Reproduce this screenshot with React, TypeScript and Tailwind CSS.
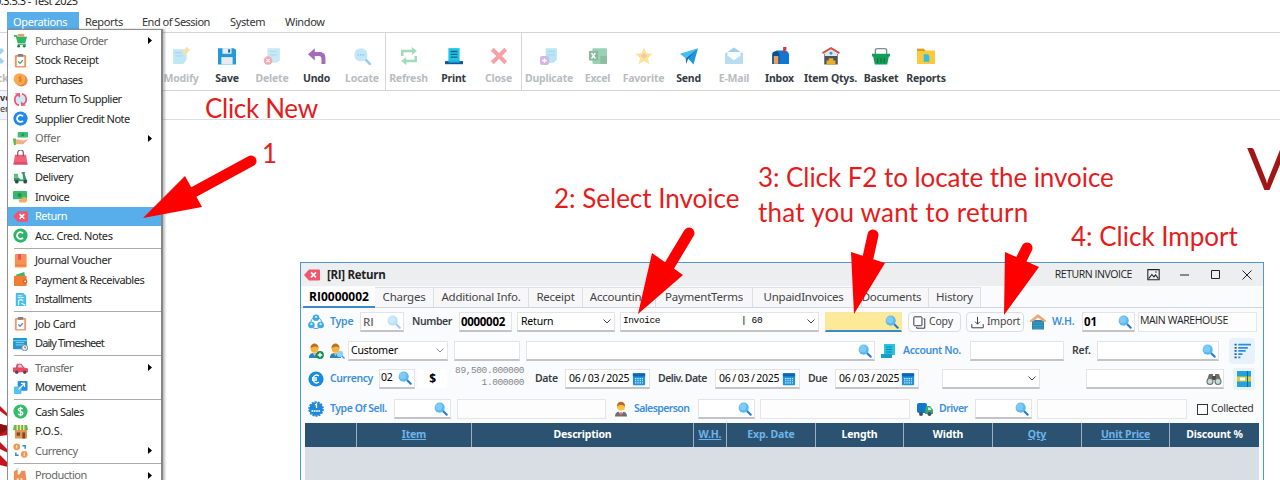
import type { ReactNode } from "react";

type P = { children?: ReactNode; className?: string };

const ART: Record<string, ReactNode> = {
  cart: (<><path d="M1 2h3l1 2h10l-2 7H5L3 4H1z" fill="#2fb766" /><path d="M5 4V1h7v3z" fill="#d8a46b" /><path d="M5 12h9" stroke="#25975a" /><circle cx="6" cy="14" r="1.5" fill="#20864d" /><circle cx="12" cy="14" r="1.5" fill="#20864d" /></>),
  clip: (<><rect x="2" y="2" width="12" height="13.5" rx="1.5" fill="#f0925e" /><rect x="4" y="4" width="8" height="10" fill="#fff" /><rect x="5" y="1" width="6" height="3" rx="1" fill="#7d8288" /><path d="m5.5 9 2 2 3-3.5" stroke="#2ea866" strokeWidth="1.3" fill="none" /></>),
  job: (<><rect x="2" y="2" width="12" height="13.5" rx="1.5" fill="#ee9a6a" /><rect x="4" y="4" width="8" height="10" fill="#fff" /><rect x="5" y="1" width="6" height="3" rx="1" fill="#7d8288" /><path d="m5.5 9 2 2 3-3.5" stroke="#3a86e8" strokeWidth="1.3" fill="none" /></>),
  coin: (<><circle cx="9" cy="9" r="6.5" fill="#e98a3c" /><circle cx="7" cy="7.5" r="6.3" fill="#fba94c" /><path d="M9 5.5H6.5v2H9v2H6M7.5 4v7" stroke="#e07a2c" fill="none" /></>),
  swap: (<><circle cx="8" cy="8" r="5" fill="#c8ecfb" /><path d="M6.500 14C1 13 .500 5 5 3M9.500 2c5.500 1 6 9 1.500 11" stroke="#ee5a74" strokeWidth="1.900" fill="none" /><path d="M2 1.500 7.500 1v5zM14 14.500l-5.500.500v-5z" fill="#ee5a74" /></>),
  cblue: (<><circle cx="8" cy="8" r="7.6" fill="#1e88ee" /><path d="M10.6 5.6a3.6 3.6 0 1 0 0 4.8" stroke="#fff" strokeWidth="2" fill="none" /></>),
  cgreen: (<><circle cx="8" cy="8" r="7.6" fill="#2cb567" /><path d="M10.6 5.6a3.6 3.6 0 1 0 0 4.8" stroke="#fff" strokeWidth="2" fill="none" /></>),
  dollar: (<><circle cx="8" cy="8" r="7.6" fill="#33bd6b" /><path d="M10.3 5.5C9.5 4 5.7 4 5.7 6.2s4.8 1.4 4.8 3.7-4 2.2-5 .5M8 3v10" stroke="#fff" strokeWidth="1.4" fill="none" /></>),
  offer: (<><rect x="5" y="1" width="11" height="6" rx="1" fill="#3fbd70" /><circle cx="10.5" cy="4" r="1.6" fill="#26955a" /><path d="M1 9h5l5 1c2 0 4-2 5-1l-5 5H4L1 13z" fill="#f2b184" /><path d="M0 8h3v7H1z" fill="#50b848" /></>),
  bag: (<><path d="M2 5h12l1.5 10.5H.5z" fill="#f2617a" /><path d="M5 7V3a3 3 0 0 1 6 0v4" stroke="#7a5360" strokeWidth="1.2" fill="none" /><path d="M1 13h14l.5 2.5H.5z" fill="#d84c66" /></>),
  scooter: (<><path d="M1 8h5l2 2h3l-1-7h2l2 6 1.500 3H1z" fill="#2f9b63" /><rect x="1" y="4" width="4.500" height="4" fill="#57c288" /><path d="M9 3h4" stroke="#444" /><circle cx="4" cy="12.5" r="2" fill="#334b45" /><circle cx="13" cy="12.5" r="2" fill="#334b45" /></>),
  cash: (<><rect x="0" y="2" width="15" height="9" rx="1" fill="#39b86b" /><circle cx="7" cy="6.5" r="2.3" fill="#1f9150" /><circle cx="12" cy="11.5" r="3" fill="#f5ac52" /><path d="M6 12c2-2 4-1 6 0l-2 2.500H7z" fill="#f0a878" /></>),
  ret: (<><path d="M5 2.5h10a1 1 0 0 1 1 1v9a1 1 0 0 1-1 1H5L0 8z" fill="#f0566e" /><path d="m7 5.4 5 5M12 5.4l-5 5" stroke="#fff" strokeWidth="1.7" /></>),
  book: (<><rect x="2" y="1" width="12.5" height="14.5" rx="1" fill="#f79153" /><path d="M5.5 1h3v7L7 6.5 5.5 8z" fill="#ee4a62" /><path d="M2 13h12" stroke="#de7a3d" /></>),
  wallet: (<><path d="M3 3 12 0l1 5H4z" fill="#3cb56c" /><rect x="1" y="4" width="13.5" height="11" rx="1" fill="#ef7d33" /><circle cx="13" cy="10" r="2.4" fill="#d55f21" /><circle cx="13" cy="10" r="1" fill="#fff" /></>),
  install: (<><path d="M3 1h8l3 3v11H3z" fill="#48bdf0" /><path d="M5 4h5M5 6h7" stroke="#e4f8ff" /><path d="M6 14V9l3-1 2 2M9 12l4 2" stroke="#e4f8ff" strokeWidth="1.2" fill="none" /></>),
  sheet: (<><rect x="0" y="2" width="15" height="12" rx="1" fill="#2596ce" /><path d="M0 5h15M3 7h9M3 9.5h9" stroke="#8ad7f2" /><circle cx="12.5" cy="12.5" r="3.2" fill="#e8ebef" stroke="#6d7a86" strokeWidth=".9" /><path d="M12.5 11v1.6h1.3" stroke="#555" strokeWidth=".8" fill="none" /></>),
  car: (<><path d="M4 4h5l3 4 4 1v4H0V8h3z" fill="#ee4862" /><path d="M5.5 5h3l2 3h-5z" fill="#a6e0f4" /><circle cx="4" cy="13" r="1.8" fill="#4b4b55" /><circle cx="12.5" cy="13" r="1.8" fill="#4b4b55" /></>),
  move: (<><rect x="5" y="1" width="10.5" height="10.5" rx="1" fill="#2a8de0" /><rect x="1" y="7" width="8" height="8" rx="1" fill="#55c3ee" /><path d="m6 10 6-6M8.5 3.7H12.3v3.8" stroke="#fff" strokeWidth="1.3" fill="none" /></>),
  shop: (<><rect x="2" y="6" width="13" height="9.5" fill="#e6944c" /><path d="M1 1h14l1 5.5H0z" fill="#67b84f" /><path d="M4.5 1v5.5M8 1v5.5M11.5 1v5.5" stroke="#f7e6a4" strokeWidth="1.5" /><rect x="4" y="9" width="3.5" height="3.5" fill="#704b35" /><rect x="10" y="9" width="3" height="6.5" fill="#704b35" /></>),
  curr: (<><circle cx="4" cy="4" r="3.6" fill="#f09850" /><circle cx="12" cy="12" r="3.6" fill="#f09850" /><path d="M10 3h3v3M6 13H3v-3" stroke="#2f86d8" strokeWidth="1.5" fill="none" /><path d="M4 2.3v3.4M12 10.3v3.4" stroke="#fff" /></>),
  factory: (<><path d="M1 15V4l2-2h2v5h2l2-4h4l1.5 12z" fill="#f08b52" /><path d="M4 15v-4h2v4M8 15v-4h2v4" fill="#fff3e4" /><path d="M3 1h3" stroke="#cfe9f4" strokeWidth="2" /></>),
  modify: (<><path d="M1 2h12v9l-3 4H1z" fill="#7fd0f2" /><path d="M3 5h6M3 8h6" stroke="#52b0e2" /><path d="m8.500 5 4.500-5 3 2.500-4.500 5z" fill="#eec35c" /></>),
  save: (<><path d="M0 1h14L16 2.500V15.500H0z" fill="#239ad7" /><rect x="4" y="1" width="8" height="5" fill="#e7eef3" /><rect x="9" y="2" width="1.8" height="3" fill="#2a6487" /><rect x="3" y="9" width="10" height="6.500" fill="#e9ecf0" /></>),
  del: (<><path d="M4 1h11v11l-3 2H4z" fill="#8ed2f0" /><path d="M6 4h6M6 7h6" stroke="#5eb5df" /><circle cx="4.5" cy="12" r="3.8" fill="#f05260" /><path d="m3 10.5 3 3m0-3-3 3" stroke="#fff" /></>),
  undo: (<path d="M6 1v3.500h4c4 0 5.500 2 5.500 5.500v5h-3.500v-4c0-2-.6-3-2.500-3H6V12L0 6.500z" fill="#a569bd" />),
  locate: (<><path d="m10 10 5 5" stroke="#3c96d8" strokeWidth="2.2" strokeLinecap="round" /><circle cx="7" cy="7" r="5.9" fill="#87d0f2" /><path d="M4 7h6" stroke="#3378aa" strokeWidth="1.3" strokeDasharray="1.3 1" /></>),
  refresh: (<><path d="M2 8V3.500h9M14 8v4.500H5" stroke="#43bd70" strokeWidth="2.200" fill="none" /><path d="m10.500 0 4.500 3.500-4.500 3.500zM5.500 9 1 12.500 5.500 16z" fill="#43bd70" /></>),
  print: (<><path d="M3 1h10v12H3z" fill="#22c3e6" /><path d="M5 4h6M5 6.5h6M5 9h6" stroke="#126887" strokeWidth="1.2" /><path d="M0 12.5h16v2.8H0z" fill="#14589b" /><path d="M3 12h10v1.8H3z" fill="#1fb0da" /></>),
  x: (<path d="M2 2 14 14M14 2 2 14" stroke="#ea4653" strokeWidth="3.600" />),
  bluex: (<path d="M2 2 14 14M14 2 2 14" stroke="#48a7df" strokeWidth="3.600" />),
  dup: (<><path d="M5 1h10v10l-3 3H5z" fill="#74cceb" /><path d="M7 4h6M7 7h6" stroke="#4bb2db" /><rect x="0" y="8" width="8" height="8" rx="1.8" fill="#ab6fd0" /><path d="M4 10v4m-2-2h4" stroke="#fff" strokeWidth="1.2" /></>),
  excel: (<><rect x="3" y="1" width="13" height="14" rx="1" fill="#36a56c" /><path d="M10 8h6v7h-6z" fill="#1d7c49" /><rect x="0" y="3.5" width="8" height="8.500" fill="#177443" /><path d="m2.200 5.300 3.500 5m0-5-3.500 5" stroke="#fff" strokeWidth="1.3" /></>),
  star: (<><path d="m8 .5 2.2 5.1 5.5.4-4.2 3.7 1.3 5.6L8 12.4l-4.8 2.9 1.3-5.6L.3 6l5.500-.4z" fill="#fac93b" /><path d="M8 5.5v5M5.5 8h5" stroke="#ee8a45" strokeWidth="1.6" /></>),
  send: (<><path d="M0 6 16 1 5 10z" fill="#44bdf4" /><path d="M16 1 12 15.500 7 10z" fill="#1798e0" /><path d="m5 10 11-9-9 10-1.500 4z" fill="#1776b8" /></>),
  mail: (<><path d="m0 6 8-5.500L16 6v9H0z" fill="#4aa0d6" /><path d="M2 4.500h12V8l-6 4-6-4z" fill="#f2f8fb" /><path d="m0 6 8 6 8-6v9H0z" fill="#72bce4" /></>),
  inbox: (<><path d="M3 15V7a3.5 3.5 0 0 1 3.5-4H12a4 4 0 0 1 4 4v8z" fill="#0f78d4" /><path d="M1 15V7a3 3 0 0 1 6.500 0v8z" fill="#0b4f94" /><path d="M2.500 8h4v7h-4z" fill="#f0a156" /><path d="M11.500 6V.500H13v2h-1.500" fill="none" stroke="#cf2c3d" strokeWidth="1.300" /></>),
  house: (<><path d="M2 6h12v9.5H2z" fill="#4d525b" /><path d="M2.500 6 8 2l5.500 4v2h-11z" fill="#dce9f2" /><path d="m.5 5.500 7.500-4.500 7.500 4.500" stroke="#d7533b" strokeWidth="1.7" fill="none" /><circle cx="8" cy="5.500" r="1.3" fill="#2a9de2" /><path d="M6 10h4v2h2v3.5H4V12h2z" fill="#e8af27" /></>),
  basket: (<><path d="M3 7V3c0-1 1-1.500 2-1.500h6c1 0 2 .500 2 1.500v4" stroke="#7e8c91" strokeWidth="1.200" fill="none" /><path d="M0 6h16v2.500h-1L13.500 15.500h-11L1 8.500H0z" fill="#139d58" /><path d="M5 10v4M8 10v4M11 10v4" stroke="#0a733c" /></>),
  folder: (<><path d="M0 1.500h6L7.500 3H16v12H0z" fill="#fbc83e" /><path d="M0 1.500h6l1.500 2H0z" fill="#dd9c23" /><path d="M6 6.500h3.500L11 8v5H6z" fill="#32bfe5" /></>),
  people: (<><path d="M8 3a6 6 0 0 1 5.5 8M3 11A6 6 0 0 1 8 3M4 13a6 6 0 0 0 8 0" stroke="#5a9dc2" fill="none" /><circle cx="8" cy="3.8" r="3.300" fill="#3ea9e4" /><circle cx="3.4" cy="11" r="3.300" fill="#3ea9e4" /><circle cx="12.6" cy="11" r="3.300" fill="#3ea9e4" /><circle cx="8" cy="2.9" r="1.2" fill="#b8e8fb" /><circle cx="3.4" cy="10" r="1.2" fill="#b8e8fb" /><circle cx="12.6" cy="10" r="1.2" fill="#b8e8fb" /></>),
  lens: (<><path d="m10 10 4.5 4.5" stroke="#1f77d8" strokeWidth="2.3" strokeLinecap="round" /><circle cx="6.5" cy="6.5" r="5.8" fill="#5ab8f2" /><circle cx="5.500" cy="5.500" r="4" fill="#7fcbf7" /></>),
  useradd: (<><path d="M1 15c0-4 2-5 5.5-5s5.5 1 5.5 5z" fill="#2382ca" /><path d="m4.5 9.5 2 4 2-4z" fill="#f0b06c" /><circle cx="6.5" cy="5.5" r="4" fill="#f7b23a" /><path d="M2.5 5c0-6 8-6 8 0-2-2-5-1-8 0z" fill="#bb7025" /><circle cx="12" cy="12" r="3.9" fill="#159052" /><path d="M12 9.8v4.4M9.8 12h4.4" stroke="#fff" strokeWidth="1.3" /></>),
  userfind: (<><path d="M1 15c0-4 2-5 5.5-5s5.5 1 5.5 5z" fill="#2382ca" /><path d="m4.5 9.5 2 4 2-4z" fill="#f0b06c" /><circle cx="6.5" cy="5.5" r="4" fill="#f7b23a" /><path d="M2.5 5c0-6 8-6 8 0-2-2-5-1-8 0z" fill="#bb7025" /><circle cx="11" cy="11" r="3.2" fill="#8bd6f6" /><path d="m13 13 2.5 2.5" stroke="#4c9cd8" strokeWidth="1.5" /></>),
  person: (<><path d="M2 15.500c0-4 2.500-5 6-5s6 1 6 5z" fill="#6a6f79" /><path d="m5.5 10 2.500 5 2.500-5z" fill="#fff" /><path d="M7.5 11h1L9 15H7z" fill="#d94545" /><circle cx="8" cy="5.5" r="4" fill="#f8c23e" /><path d="M4 5.500c-.500-6.500 8.500-6.500 8 0-2-2-6-2-8 0z" fill="#bc672b" /></>),
  account: (<><path d="M4 1h11v11H4z" fill="#28c3de" /><path d="M1 11h11v4H1z" fill="#1a9fc6" /><path d="M6 4h6M6 6.5h6M6 9h6" stroke="#0b85ad" /></>),
  euro: (<><circle cx="8" cy="8" r="7.6" fill="#188ce2" /><path d="M11 5a3.8 3.8 0 1 0 0 6M4 7h5M4 9h5" stroke="#fff" strokeWidth="1.3" fill="none" /></>),
  free: (<><circle cx="8" cy="8" r="6.800" fill="#2188d8" /><circle cx="8" cy="8" r="7" fill="none" stroke="#2188d8" strokeWidth="1.600" strokeDasharray="2 1.142" /><path d="M7 4 8.500 3v4" stroke="#fff" strokeWidth="1.300" fill="none" /><path d="M3.500 10h9" stroke="#fff" strokeWidth="2" strokeDasharray="1.700 .600" opacity=".8" /></>),
  whouse: (<><path d="M2 6h12v9.5H2z" fill="#2a86b0" /><path d="M3 9h10M3 11.5h10M3 14h10" stroke="#3f9fc6" strokeWidth="1.2" /><path d="M0 6.500 8 0l8 6.500V8l-3-.500-5-4-5 4L0 8z" fill="#f3a56f" /></>),
  truck: (<><rect x="0" y="2" width="10" height="10" rx="2" fill="#1376c8" /><path d="M9 5h4l3 4v4H8z" fill="#39a96c" /><path d="M11 6.5h2l1.5 2.5H11z" fill="#c8f0ee" /><circle cx="4" cy="13" r="2" fill="#405168" /><circle cx="12.5" cy="13" r="2" fill="#405168" /></>),
  cal: (<><rect x="1" y="1.5" width="14" height="13.5" rx="1" fill="#2092da" /><path d="M1 1.5h14V5H1z" fill="#0f65b2" /><path d="M3.5 7.5h9M3.5 10h9M3.5 12.5h9" stroke="#c9edfb" strokeWidth="1.4" strokeDasharray="1.6 1" /></>),
  bino: (<><path d="M3 3h4v6H1zM9 3h4l2 6H9z" fill="#746e69" /><path d="M6 5h4v4H6z" fill="#504d4b" /><circle cx="4" cy="10.5" r="3" fill="#c0dedb" stroke="#6d7272" strokeWidth="1.1" /><circle cx="12" cy="10.5" r="3" fill="#c0dedb" stroke="#6d7272" strokeWidth="1.1" /></>),
  list: (<><path d="M4 1.5h12M4 4.5h9M4 7.5h7M4 10.5h4M4 13.5h2" stroke="#2e8ede" strokeWidth="1.7" /><path d="M.5 1.5h2M.5 4.5h2M.5 7.5h2M.5 10.5h2M.5 13.5h2" stroke="#2a5f9e" strokeWidth="1.7" /></>),
  note: (<><rect x="1" y="0" width="14" height="16" fill="#22a2df" /><rect x="1" y="5.5" width="14" height="5" fill="#e7ca2f" /><rect x="4" y="6.5" width="5" height="3" fill="#fff" /><path d="M11.5 0v16" stroke="#096da7" /></>),
  copy: (<><rect x="1" y="1" width="10" height="11" rx="1" fill="none" stroke="#333" strokeWidth="1.2" /><path d="M13 3.5h1.5V15h-10v-1.5" fill="none" stroke="#333" strokeWidth="1.2" /></>),
  imp: (<path d="M8 1v9M5 7l3 3 3-3M1 10v4.500h14V10" stroke="#3c3c3c" strokeWidth="1.2" fill="none" />),
  pic: (<><path d="M1 2h14v12.5H1z" fill="none" stroke="#222" strokeWidth="1.3" /><path d="m2 13 4-5 2.5 3 2-2.5L14 13M10 5h2" fill="none" stroke="#222" strokeWidth="1.3" /></>),
};

function Icon({ name, size = "size-4", className = "" }: { name: string; size?: string; className?: string }) {
  return (<svg viewBox="0 0 16 16" className={`shrink-0 ${size} ${className}`}>{ART[name]}</svg>);
}

type MenuEntry = [icon: string, label: string, tracking: string, sub?: boolean] | null;

const MENU: MenuEntry[] = [
  ["cart", "Purchase Order", "tracking-[-0.6px]", true],
  ["clip", "Stock Receipt", "tracking-[-0.4px]"],
  ["coin", "Purchases", "tracking-[-0.6px]"],
  ["swap", "Return To Supplier", "tracking-[-0.5px]"],
  ["cblue", "Supplier Credit Note", "tracking-[-0.5px]"],
  ["offer", "Offer", "tracking-[-0.3px]", true],
  ["bag", "Reservation", "tracking-[-0.6px]"],
  ["scooter", "Delivery", "tracking-[-0.5px]"],
  ["cash", "Invoice", "tracking-[-0.4px]"],
  ["ret", "Return", "tracking-[-0.5px]"],
  ["cgreen", "Acc. Cred. Notes", "tracking-[-0.4px]"],
  null,
  ["book", "Journal Voucher", "tracking-[-0.4px]"],
  ["wallet", "Payment & Receivables", "tracking-[-0.5px]"],
  ["install", "Installments", "tracking-[-0.65px]"],
  null,
  ["job", "Job Card", "tracking-[-0.4px]"],
  ["sheet", "Daily Timesheet", "tracking-[-0.9px]"],
  null,
  ["car", "Transfer", "tracking-[-0.6px]", true],
  ["move", "Movement", "tracking-[-0.6px]"],
  null,
  ["dollar", "Cash Sales", "tracking-[-0.6px]"],
  ["shop", "P.O.S.", "tracking-[0px]"],
  ["curr", "Currency", "tracking-[-0.5px]", true],
  null,
  ["factory", "Production", "tracking-[-0.5px]", true],
];

function OperationsMenu() {
  return (
    <div className="absolute left-[7px] top-[29px] h-[460px] w-[156px] border border-[#8f8f8f] border-r-2 border-r-[#858585] bg-white pt-[1px] text-[11px] shadow-[2px_0_2px_rgba(0,0,0,0.25)]">
      {MENU.map((m, i) =>
        m ? (
          <div key={i} className={"flex h-[19.5px] items-center pl-[5px] " + (m[1] === "Return" ? "bg-[#58aeea] text-white" : m[3] ? "text-[#666]" : "text-[#252525]")}>
            <Icon name={m[0]} size="size-[15px]" />
            <span className={"ml-[7px] whitespace-nowrap " + m[2]}>{m[1]}</span>
            {m[3] && <svg viewBox="0 0 4 7" className="ml-auto mr-[9px] h-[7px] w-[4px]"><path d="m0 0 4 3.5L0 7z" /></svg>}
          </div>
        ) : (
          <div key={i} className="flex h-[5px] items-center"><div className="ml-[6px] h-px grow bg-[#a9a9a9]" /></div>
        ),
      )}
    </div>
  );
}

function Tool({ icon, label, off, className }: { icon: string; label: string; off?: boolean; className: string }) {
  return (
    <div className={"flex shrink-0 flex-col items-center pt-[14px] " + className}>
      <Icon name={icon} size="size-[18px]" className={off ? "opacity-50" : ""} />
      <span className={"mt-[6px] whitespace-nowrap text-[10.5px] font-bold leading-[15px] tracking-[-0.2px] " + (off ? "text-[#b9bcbf]" : "text-[#343b43]")}>{label}</span>
    </div>
  );
}

function Toolbar() {
  return (
    <div className="flex h-[58px] border-b border-[#d5d5d5]">
      <Tool icon="bluex" label="Back" off className="-ml-[25px] w-[42px]" />
      <Tool icon="modify" label="Modify" off className="ml-[141px] w-[46px]" />
      <Tool icon="save" label="Save" className="w-[46px]" />
      <Tool icon="del" label="Delete" off className="w-[44px]" />
      <Tool icon="undo" label="Undo" className="w-[45px]" />
      <Tool icon="locate" label="Locate" off className="w-[46px]" />
      <div className="w-px bg-[#d5d5d5]" />
      <Tool icon="refresh" label="Refresh" off className="w-[45px]" />
      <Tool icon="print" label="Print" className="w-[45px]" />
      <Tool icon="x" label="Close" off className="w-[45px]" />
      <div className="w-px bg-[#d5d5d5]" />
      <Tool icon="dup" label="Duplicate" off className="ml-[2px] w-[50px]" />
      <Tool icon="excel" label="Excel" off className="w-[47px]" />
      <Tool icon="star" label="Favorite" off className="w-[45px]" />
      <Tool icon="send" label="Send" className="w-[45px]" />
      <Tool icon="mail" label="E-Mail" off className="w-[46px]" />
      <Tool icon="inbox" label="Inbox" className="w-[45px]" />
      <Tool icon="house" label="Item Qtys." className="w-[57px]" />
      <Tool icon="basket" label="Basket" className="w-[44px]" />
      <Tool icon="folder" label="Reports" className="w-[46px]" />
    </div>
  );
}

function Field({ children, className = "" }: P) {
  return (<div className={"flex h-[20px] shrink-0 items-center whitespace-nowrap border border-b-2 text-black " + (className.includes("bg-") ? "" : "border-[#e3e3e8] border-b-[#c3c3c8] bg-white ") + className}>{children}</div>);
}
function Box({ children, className = "" }: P) {
  return (<div className={"flex h-[20px] shrink-0 items-center whitespace-nowrap border border-[#e6e6ea] bg-[#fdfdfe] " + className}>{children}</div>);
}
function Label({ children, className = "" }: P) {
  return (<span className={"shrink-0 whitespace-nowrap font-semibold " + className}>{children}</span>);
}
function Lens({ className = "" }: P) {
  return <Icon name="lens" size="size-[14px]" className={"ml-auto mr-[2px] " + className} />;
}
function Chevron({ className = "" }: P) {
  return (<svg viewBox="0 0 8 5" className={"ml-auto mr-[3px] h-[5px] w-[8px] " + className}><path d="m.5.5 3.5 3.5 3.5-3.5" fill="none" stroke="#444" /></svg>);
}
function DateField({ className }: P) {
  return (
    <Field className={"pl-[3px] text-[10.5px] " + className}>
      <span className="tracking-[-0.3px] [word-spacing:-0.6px]">06 / 03 / 2025</span>
      <Icon name="cal" size="size-[14px]" className="ml-auto mr-[3px]" />
    </Field>
  );
}

const TABS: [string, string][] = [
  ["Charges", "w-[59px]"],
  ["Additional Info.", "w-[95px]"],
  ["Receipt", "w-[54px]"],
  ["Accounting", "w-[73px]"],
  ["PaymentTerms", "w-[97px]"],
  ["UnpaidInvoices", "w-[109px] pr-[7px]"],
  ["Documents", "w-[67px] pr-[7px]"],
  ["History", "w-[52px]"],
];

const COLUMNS: [string, string][] = [
  ["", "w-[52px]"],
  ["Item", "w-[115px] text-[#6db4ea] underline"],
  ["Description", "w-[222px] text-white"],
  ["W.H.", "w-[33px] text-[#6db4ea] underline"],
  ["Exp. Date", "w-[89px] text-[#6db4ea]"],
  ["Length", "w-[88px] text-white"],
  ["Width", "w-[89px] text-white"],
  ["Qty", "w-[89px] text-[#6db4ea] underline"],
  ["Unit Price", "w-[88px] text-[#6db4ea] underline"],
  ["Discount %", "w-[89px] text-white"],
];

const BLUE = "text-[#3d8fdc]";
const DARK = "text-[#3a3f45]";

function ReturnWindow() {
  return (
    <div className="absolute left-[300px] top-[262px] h-[230px] w-[964px] border border-[#4e97cf] bg-[#fafbfd] text-[10.5px] tracking-[-0.2px]">
      <div className="flex h-[23px] items-center bg-[#edeef0] pl-[3px]">
        <Icon name="ret" />
        <span className="ml-[7px] w-[62px] whitespace-nowrap font-['Open_Sans'] text-[11.5px] font-bold tracking-[-0.3px] text-[#222]">[RI] Return</span>
        <span className="ml-auto whitespace-nowrap font-['Open_Sans'] text-[10.5px] tracking-[-0.45px] text-[#222]">RETURN INVOICE</span>
        <Icon name="pic" size="size-[13px]" className="ml-[15px]" />
        <svg viewBox="0 0 76 12" className="ml-[18px] mr-[9px] h-[12px] w-[76px]"><path d="M2 6h9M33.500 1.500h8v8h-8zM64.500 1.500l9 9M73.500 1.500l-9 9" fill="none" stroke="#222" /></svg>
      </div>
      <div className="mt-[1px] flex h-[21px] border-b border-[#d4d5da] text-[11.5px] text-[#444]">
        <div className="ml-[2px] flex h-[21px] w-[72px] items-center justify-center border-b-2 border-[#3d87cb] bg-white font-['Open_Sans'] text-[12px] font-bold tracking-[0px] text-black">RI0000002</div>
        {TABS.map(([t, w]) => (
          <div key={t} className={"flex shrink-0 items-center justify-center whitespace-nowrap border-r border-t border-[#dfe0e4] bg-[#f7f7f9] pb-[1px] tracking-[-0.25px] " + w}>{t}</div>
        ))}
      </div>
      <div className="mt-[3px] flex h-[22px] items-center">
        <Icon name="people" className="ml-[7px]" />
        <Label className={"ml-[6px] w-[30px] " + BLUE}>Type</Label>
        <Field className="w-[44px] pl-[2px] font-['Open_Sans'] text-[11.5px] font-semibold"><span className="text-[#666]">RI</span><Lens className="opacity-40" /></Field>
        <Label className={"ml-[8px] w-[47px] tracking-[-0.4px] " + DARK}>Number</Label>
        <Field className="w-[53px] pl-[1px] font-['Open_Sans'] text-[11.5px] font-bold tracking-[-0.3px]">0000002</Field>
        <Field className="ml-[5px] w-[98px] pl-[3px] text-[10.5px]">Return<Chevron /></Field>
        <Field className="ml-[5px] w-[199px] pl-[2px] font-['Liberation_Mono'] text-[9.5px] tracking-[-0.4px]"><span className="w-[118px]">Invoice</span><span>| 60</span><Chevron /></Field>
        <Field className="ml-[6px] w-[77px] border-[#f8e89a] border-b-[#3d87cb] bg-[#fcea98]"><Lens /></Field>
        <div className="ml-[6px] flex h-[20px] w-[53px] items-center rounded border border-[#dcdde2] bg-[#fbfcfe] pl-[4px] text-[#444]"><Icon name="copy" size="size-[13px]" /><span className="ml-[3px]">Copy</span></div>
        <div className="ml-[5px] flex h-[20px] w-[58px] items-center rounded border border-[#dcdde2] bg-[#fbfcfe] pl-[4px] text-[#444]"><Icon name="imp" size="size-[13px]" /><span className="ml-[3px]">Import</span></div>
        <Icon name="whouse" className="ml-[6px]" />
        <Label className={"ml-[6px] w-[30px] " + BLUE}>W.H.</Label>
        <Field className="w-[53px] pl-[1px] font-['Open_Sans'] text-[11.5px] font-bold">01<Lens /></Field>
        <Box className="ml-[3px] w-[119px] pb-[3px] pl-[1px] font-['Open_Sans'] text-[10.5px] tracking-[-0.4px] text-[#222]">MAIN WAREHOUSE</Box>
      </div>
      <div className="mt-[4px] flex h-[28px] items-center">
        <Icon name="useradd" className="ml-[7px]" />
        <Icon name="userfind" className="ml-[5px]" />
        <Field className="ml-[3px] w-[100px] pl-[2px] text-[10.5px]">Customer<Chevron className="opacity-60" /></Field>
        <Field className="ml-[6px] w-[66px]" />
        <Field className="ml-[6px] w-[349px]"><Lens /></Field>
        <Icon name="account" className="ml-[5px]" />
        <Label className={"ml-[7px] w-[67px] tracking-[-0.4px] " + BLUE}>Account No.</Label>
        <Field className="w-[94px]" />
        <Label className={"ml-[8px] w-[25px] " + DARK}>Ref.</Label>
        <Field className="w-[122px]"><Lens /></Field>
        <div className="ml-[10px] flex h-[26px] w-[26px] items-center justify-center rounded bg-[#e8f2fb]"><Icon name="list" size="size-[17px]" /></div>
      </div>
      <div className="flex h-[28px] items-center">
        <Icon name="euro" className="ml-[7px]" />
        <Label className={"ml-[6px] w-[49px] tracking-[-0.4px] " + BLUE}>Currency</Label>
        <Field className="w-[36px] pb-[1px] pl-[1px] text-[10.5px]">02<Lens /></Field>
        <div className="ml-[3px] flex h-[18px] w-[29px] items-center justify-center bg-white text-[12px] font-bold">$</div>
        <div className="ml-[5px] w-[72px] text-right font-['Liberation_Mono'] text-[9.5px] leading-[12px] tracking-[-0.4px] text-[#85878b] -mt-[4px]"><div>89,500.000000</div><div>1.000000</div></div>
        <Label className={"ml-[11px] w-[30px] tracking-[-0.4px] " + DARK}>Date</Label>
        <DateField className="w-[85px]" />
        <Label className={"ml-[8px] w-[57px] tracking-[-0.55px] " + DARK}>Deliv. Date</Label>
        <DateField className="w-[85px]" />
        <Label className={"ml-[8px] w-[27px] tracking-[-0.4px] " + DARK}>Due</Label>
        <DateField className="w-[84px]" />
        <Field className="ml-[23px] w-[98px]"><Chevron /></Field>
        <Field className="ml-[46px] w-[138px]"><Icon name="bino" className="ml-auto mr-[1px]" /></Field>
        <div className="ml-[9px] flex h-[22px] w-[22px] items-center justify-center rounded bg-[#e8f2fb]"><Icon name="note" /></div>
      </div>
      <div className="mt-[2px] flex h-[28px] items-center">
        <Icon name="free" className="ml-[7px]" />
        <Label className={"ml-[6px] w-[64px] tracking-[-0.45px] " + BLUE}>Type Of Sell.</Label>
        <Field className="w-[57px]"><Lens /></Field>
        <Box className="ml-[6px] w-[149px]" />
        <Icon name="person" className="ml-[7px]" />
        <Label className={"ml-[5px] w-[64px] tracking-[-0.6px] " + BLUE}>Salesperson</Label>
        <Field className="w-[57px]"><Lens /></Field>
        <Box className="ml-[5px] w-[150px]" />
        <Icon name="truck" className="ml-[7px]" />
        <Label className={"ml-[6px] w-[36px] tracking-[-0.5px] " + BLUE}>Driver</Label>
        <Field className="w-[57px]"><Lens /></Field>
        <Box className="ml-[5px] w-[150px]" />
        <div className="ml-[10px] size-[11px] border border-[#333] bg-white" />
        <span className="ml-[3px] tracking-[-0.35px] text-[#333]">Collected</span>
      </div>
      <div className="mx-[4px] flex h-[24px] bg-[#2b5371]">
        {COLUMNS.map(([t, c], i) => (
          <div key={i} className={"flex shrink-0 items-center justify-center border-r border-[#9fb1bf] font-bold last:border-r-0 " + c}>{t}</div>
        ))}
      </div>
      <div className="mx-[4px] h-[60px] bg-[#d8dee4]" />
    </div>
  );
}

function Annotations() {
  return (
    <div className="absolute inset-0 font-['Lato'] text-[26px] leading-[30px] text-[#e51c1c]">
      <svg viewBox="0 0 1280 480" className="absolute inset-0 h-[480px] w-[1280px]">
        <g fill="#fe0000" stroke="#fe0000">
          <path d="M192 193 251 161M668 268 689 233M867 262 873 235M1019 264 1027 248" strokeWidth="11" strokeLinecap="round" />
          <path stroke="none" d="m143 218 42-42 17 31zM638 314l14-61 31 22zM854 314l-3-62 34 11zM1004 315l1-63 34 15z" />
        </g>
      </svg>
      <span className="absolute left-[205px] top-[93px] whitespace-nowrap tracking-[-0.3px]">Click New</span>
      <span className="absolute left-[262px] top-[138px]">1</span>
      <span className="absolute left-[554px] top-[183px] whitespace-nowrap">2: Select Invoice</span>
      <span className="absolute left-[758px] top-[160px] whitespace-nowrap leading-[35px] tracking-[-0.06px]">3: Click F2 to locate the invoice<br /><span className="tracking-[0.25px]">that you want to return</span></span>
      <span className="absolute left-[1071px] top-[221px] whitespace-nowrap">4: Click Import</span>
      <span className="absolute left-[1247px] top-[133px] text-[59px] leading-[70px] text-[#a31515]">V</span>
    </div>
  );
}

export default function App() {
  return (
    <div className="relative h-[480px] w-[1280px] overflow-hidden bg-white font-['Noto_Sans','Liberation_Sans',sans-serif]">
      <div className="flex h-[12px] items-center overflow-hidden"><span className="-ml-[5px] -mt-[11px] whitespace-nowrap text-[11px] leading-[14px] tracking-[-0.5px] text-[#222]">0.3.5.3 - Test 2025</span></div>
      <div className="flex h-[20px] text-[11px] leading-[19px] tracking-[-0.35px] text-[#333]">
        <span className="ml-[7px] w-[72px] bg-[#58aeea] pl-[6px] text-white">Operations</span>
        <span className="ml-[6px] w-[57px]">Reports</span>
        <span className="w-[88px] tracking-[-0.5px]">End of Session</span>
        <span className="w-[55px]">System</span>
        <span>Window</span>
      </div>
      <div className="h-px bg-[#d5d5d5]" />
      <Toolbar />
      <div className="flex h-[29px] border-b border-[#dedede]">
        <div className="flex w-[8px] flex-col bg-[#eef4fb] pt-[1px] text-[9px] leading-[11px] text-[#333]"><b>vo</b><span>em</span></div>
      </div>
      <svg viewBox="0 0 8 80" className="mt-[280px] h-[80px] w-[8px]"><path d="M0 6 8 14v3L0 11zM0 24l8 2v9L0 36zM0 42l8 8v3L0 49zM0 55l8 8v4L0 65z" fill="#c8141c" /><path d="M0 24l8 2v3L0 34z" fill="#811" /></svg>
      <OperationsMenu />
      <ReturnWindow />
      <Annotations />
    </div>
  );
}
